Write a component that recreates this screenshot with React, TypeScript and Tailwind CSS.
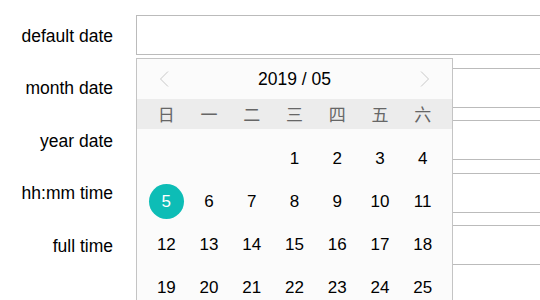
const labels = ["default date", "month date", "year date", "hh:mm time", "full time"];
const weekDays = ["日", "一", "二", "三", "四", "五", "六"];

const days: (number | null)[] = [
  null, null, null, 1, 2, 3, 4,
  5, 6, 7, 8, 9, 10, 11,
  12, 13, 14, 15, 16, 17, 18,
  19, 20, 21, 22, 23, 24, 25,
];

const Chevron = ({ dir }: { dir: "left" | "right" }) => (
  <svg width="10" height="16" viewBox="0 0 10 16" fill="none">
    <path
      d={dir === "left" ? "M9 0.5 L1.5 8 L9 15.5" : "M1 0.5 L8.5 8 L1 15.5"}
      stroke="#c8c8c8"
      strokeWidth="1"
    />
  </svg>
);

const App = () => {
  return (
    <div
      className="relative w-[540px] h-[300px] overflow-hidden bg-white text-black"
      style={{ fontFamily: '"Liberation Sans", Arial, sans-serif' }}
    >
      <div className="pt-[15px] flex flex-col gap-[12.5px]">
        {labels.map((label) => (
          <div key={label} className="flex items-center">
            <label className="w-[113px] shrink-0 whitespace-nowrap text-right text-[17.5px] leading-none mt-[3px]">
              {label}
            </label>
            <input
              type="text"
              className="ml-[23px] w-[500px] h-10 shrink-0 border border-[#bbbbbb] bg-white outline-none"
            />
          </div>
        ))}
      </div>

      <div className="absolute left-[136px] top-[58px] h-[250px] w-[317px] border border-[#c4c4c4] bg-[#fbfbfb]">
        <div className="h-10 flex items-center justify-between px-[22px]">
          <Chevron dir="left" />
          <span className="text-[17.5px]">2019 / 05</span>
          <Chevron dir="right" />
        </div>
        <div
          className="h-[30px] bg-[#ececec] px-2 grid grid-cols-7 items-center text-[#666] text-[17px]"
          style={{ fontFamily: '"Noto Sans CJK SC", sans-serif' }}
        >
          {weekDays.map((d) => (
            <span key={d} className="text-center">
              {d}
            </span>
          ))}
        </div>
        <div className="px-2 pt-[8px] grid grid-cols-7">
          {days.map((d, i) => (
            <div key={i} className="h-[43px] flex items-center justify-center text-[17px]">
              {d === 5 ? (
                <span className="w-[35px] h-[35px] rounded-full bg-[#0dbdb6] text-white flex items-center justify-center">
                  {d}
                </span>
              ) : (
                d
              )}
            </div>
          ))}
        </div>
      </div>
    </div>
  );
};

export default App;
